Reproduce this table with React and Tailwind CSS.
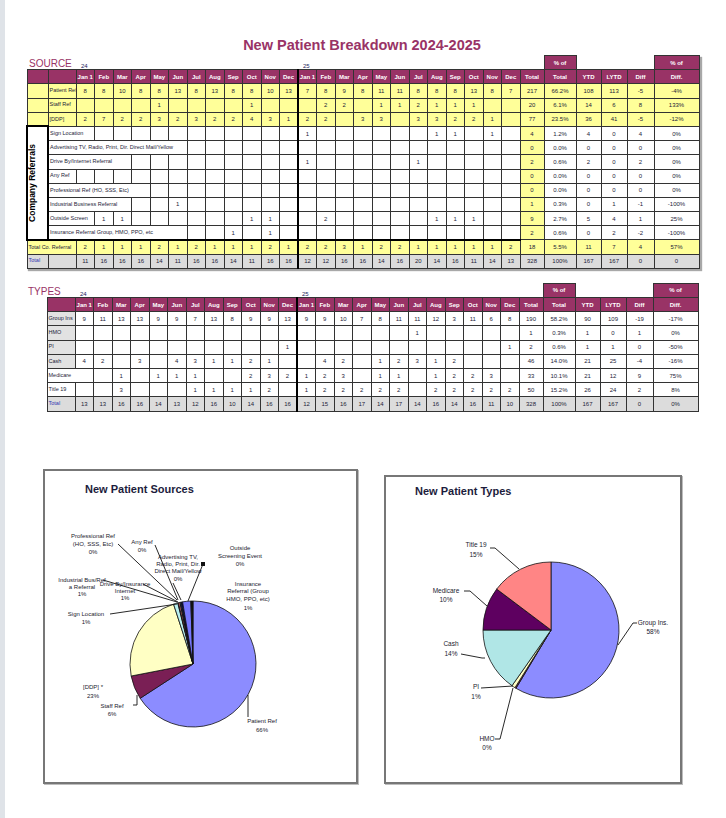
import React from "react"

// spreadsheet print preview: new patient breakdown + two pie charts

const MONTHS = ["Jan 1", "Feb", "Mar", "Apr", "May", "Jun", "Jul", "Aug", "Sep", "Oct", "Nov", "Dec"]
const HEAD = [...MONTHS, ...MONTHS]

const B = "border border-[#333]"
const C = `${B} p-0 text-center leading-none text-[6px] text-[#1c1c38]`
const Y = "bg-[#ffff99]"
const G = "bg-[#dcdcdc]"
const PLUM = "bg-[#993366]"
const LBL = `${B} p-0 pl-[1px] text-left leading-none text-[5.5px] text-[#1c1c38] whitespace-nowrap overflow-hidden`

const at = (map) => Array.from({ length: 24 }, (_, i) => (map[i] !== undefined ? map[i] : ""))

const yellowRows = [
  { label: "Patient Ref", v: [8, 8, 10, 8, 8, 13, 8, 13, 8, 8, 10, 13, 7, 8, 9, 8, 11, 11, 8, 8, 8, 13, 8, 7], r: ["217", "66.2%", "108", "113", "-5", "-4%"] },
  { label: "Staff Ref", v: at({ 4: 1, 9: 1, 13: 2, 14: 2, 16: 1, 17: 1, 18: 2, 19: 1, 20: 1, 21: 1 }), r: ["20", "6.1%", "14", "6", "8", "133%"] },
  { label: "[DDP]", v: [2, 7, 2, 2, 3, 2, 3, 2, 2, 4, 3, 1, 2, 2, "", 3, 3, "", 3, 3, 2, 2, 1, ""], r: ["77", "23.5%", "36", "41", "-5", "-12%"] },
]

const companyRows = [
  { label: "Sign Location", span: 2, v: at({ 12: 1, 19: 1, 20: 1, 22: 1 }), r: ["4", "1.2%", "4", "0", "4", "0%"] },
  { label: "Advertising TV, Radio, Print, Dir. Direct Mail/Yellow", span: 7, v: at({}), r: ["0", "0.0%", "0", "0", "0", "0%"] },
  { label: "Drive By/Internet Referral", span: 4, v: at({ 12: 1, 18: 1 }), r: ["2", "0.6%", "2", "0", "2", "0%"] },
  { label: "Any Ref", span: 1, v: at({}), r: ["0", "0.0%", "0", "0", "0", "0%"] },
  { label: "Professional Ref (HO, SSS, Etc)", span: 5, v: at({}), r: ["0", "0.0%", "0", "0", "0", "0%"] },
  { label: "Industrial Business Referral", span: 4, v: at({ 5: 1 }), r: ["1", "0.3%", "0", "1", "-1", "-100%"] },
  { label: "Outside Screen", span: 2, v: at({ 1: 1, 2: 1, 9: 1, 10: 1, 13: 2, 19: 1, 20: 1, 21: 1 }), r: ["9", "2.7%", "5", "4", "1", "25%"] },
  { label: "Insurance Referral Group, HMO, PPO, etc", span: 7, v: at({ 8: 1, 10: 1 }), r: ["2", "0.6%", "0", "2", "-2", "-100%"] },
]

const totalCo = { v: [2, 1, 1, 1, 2, 1, 2, 1, 1, 1, 2, 1, 2, 2, 3, 1, 2, 2, 1, 1, 1, 1, 1, 2], r: ["18", "5.5%", "11", "7", "4", "57%"] }
const total1 = { v: [11, 16, 16, 16, 14, 11, 16, 16, 14, 11, 16, 16, 12, 12, 16, 16, 14, 16, 20, 14, 16, 11, 14, 13], r: ["328", "100%", "167", "167", "0", "0"] }

const typeRows = [
  { label: "Group Ins", grey: true, span: 1, v: [9, 11, 13, 13, 9, 9, 7, 13, 8, 9, 9, 13, 9, 9, 10, 7, 8, 11, 11, 12, 3, 11, 6, 8], r: ["190", "58.2%", "90", "109", "-19", "-17%"] },
  { label: "HMO", grey: true, span: 1, v: at({ 18: 1 }), r: ["1", "0.3%", "1", "0", "1", "0%"] },
  { label: "PI", grey: true, span: 1, v: at({ 11: 1, 23: 1 }), r: ["2", "0.6%", "1", "1", "0", "-50%"] },
  { label: "Cash", grey: true, span: 1, v: [4, 2, "", 3, "", 4, 3, 1, 1, 2, 1, "", "", 4, 2, "", 1, 2, 3, 1, 2, "", "", ""], r: ["46", "14.0%", "21", "25", "-4", "-16%"] },
  { label: "Medicare", span: 2, v: ["", "", 1, "", 1, 1, 1, "", "", 2, 3, 2, 1, 2, 3, "", 1, 1, "", 1, 2, 2, 3, ""], r: ["33", "10.1%", "21", "12", "9", "75%"] },
  { label: "Title 19", span: 1, v: ["", "", 3, "", "", "", 1, 1, 1, 1, 2, "", 1, 2, 2, 2, 2, 2, "", 2, 2, 2, 2, 2], r: ["50", "15.2%", "26", "24", "2", "8%"] },
]
const total2 = { v: [13, 13, 16, 16, 14, 13, 12, 16, 10, 14, 16, 16, 12, 15, 16, 17, 14, 17, 14, 16, 14, 16, 11, 10], r: ["328", "100%", "167", "167", "0", "0%"] }

const Cols = () => (
  <colgroup>
    <col className="w-[21px]" />
    <col className="w-[28px]" />
    {HEAD.map((_, i) => (
      <col key={i} className="w-[18.5px]" />
    ))}
    <col className="w-[24px]" />
    <col className="w-[32px]" />
    <col className="w-[25px]" />
    <col className="w-[26px]" />
    <col className="w-[27px]" />
    <col className="w-[45px]" />
  </colgroup>
)

function Vals({ v, from = 0, bg = "" }) {
  return v.slice(from).map((x, j) => {
    const i = from + j
    return (
      <td key={i} className={`${C} ${bg} ${i === 12 ? "border-l-2 border-l-black" : ""}`}>
        {x}
      </td>
    )
  })
}

function Right({ r, bg = "", totalBg = "" }) {
  return (
    <>
      <td className={`${C} ${totalBg}`}>{r[0]}</td>
      {r.slice(1).map((x, i) => (
        <td key={i} className={`${C} ${bg}`}>
          {x}
        </td>
      ))}
    </>
  )
}

function TopRow({ label }) {
  return (
    <tr className="h-[14.2px]">
      <td colSpan={2} className="p-0 pl-[2px] align-bottom text-left text-[10px] leading-none text-[#993366] whitespace-nowrap">
        {label}
      </td>
      <td className="p-0 pl-[5px] align-bottom text-left text-[6px] leading-none text-[#1c1c60]">24</td>
      {Array.from({ length: 11 }, (_, i) => (
        <td key={i} className="p-0" />
      ))}
      <td className="p-0 pl-[5px] align-bottom text-left text-[6px] leading-none text-[#1c1c60]">25</td>
      {Array.from({ length: 11 }, (_, i) => (
        <td key={i} className="p-0" />
      ))}
      <td className="p-0" />
      <td className={`${C} ${PLUM} font-bold text-white`}>% of</td>
      <td className="p-0" />
      <td className="p-0" />
      <td className="p-0" />
      <td className={`${C} ${PLUM} font-bold text-white`}>% of</td>
    </tr>
  )
}

function HeadRow({ withA }) {
  return (
    <tr className="h-[14.2px]">
      {withA ? <td className={`${B} ${PLUM}`} /> : <td className="p-0" />}
      <td className={`${B} ${PLUM}`} />
      {HEAD.map((m, i) => (
        <td key={i} className={`${C} ${PLUM} font-bold text-white ${i === 12 ? "border-l-2 border-l-black" : ""}`}>
          {m}
        </td>
      ))}
      {["Total", "Total", "YTD", "LYTD", "Diff", "Diff."].map((h, i) => (
        <td key={i} className={`${C} ${PLUM} font-bold text-white`}>
          {h}
        </td>
      ))}
    </tr>
  )
}

function SourceTable() {
  return (
    <table className="ml-[21px] mt-[2px] w-[672px] table-fixed border-collapse shadow-[2px_2px_1px_#a8a8a8]">
      <Cols />
      <tbody>
        <TopRow label="SOURCE" />
        <HeadRow withA />
        {yellowRows.map((row) => (
          <tr key={row.label} className="h-[14.2px]">
            <td className={`${B} ${Y}`} />
            <td className={`${LBL} ${Y}`}>{row.label}</td>
            <Vals v={row.v} bg={Y} />
            <Right r={row.r} bg={Y} totalBg={Y} />
          </tr>
        ))}
        {companyRows.map((row, k) => (
          <tr key={row.label} className="h-[14.2px]">
            {k === 0 && (
              <td rowSpan={8} className="border-2 border-black bg-white p-0">
                <div className="mx-auto rotate-180 whitespace-nowrap text-[8.5px] font-bold leading-none text-black [writing-mode:vertical-rl]">
                  Company Referrals
                </div>
              </td>
            )}
            <td colSpan={row.span} className={`${LBL} bg-white`}>
              {row.label}
            </td>
            <Vals v={row.v} from={row.span - 1} />
            <Right r={row.r} bg="bg-white" totalBg={Y} />
          </tr>
        ))}
        <tr className="h-[14.2px]">
          <td colSpan={2} className={`${LBL} ${Y} border-t-2 border-t-black`}>
            Total Co. Referral
          </td>
          <Vals v={totalCo.v} bg={`${Y} border-t-2 border-t-black`} />
          <Right r={totalCo.r} bg={Y} totalBg={Y} />
        </tr>
        <tr className="h-[14.2px]">
          <td className={`${LBL} ${G} text-[#3434b0]`}>Total</td>
          <td className={`${B} ${G}`} />
          <Vals v={total1.v} bg={G} />
          <Right r={total1.r} bg={G} totalBg={G} />
        </tr>
      </tbody>
    </table>
  )
}

function TypesTable() {
  return (
    <table className="ml-[21px] mt-[14px] w-[672px] table-fixed border-collapse">
      <Cols />
      <tbody>
        <TopRow label="TYPES" />
        <HeadRow />
        {typeRows.map((row) => (
          <tr key={row.label} className="h-[14.2px]">
            <td className="p-0" />
            <td colSpan={row.span} className={`${LBL} ${row.grey ? "bg-[#e2e2e2]" : "bg-white"}`}>
              {row.label}
            </td>
            <Vals v={row.v} from={row.span - 1} />
            <Right r={row.r} />
          </tr>
        ))}
        <tr className="h-[14.2px]">
          <td className="p-0" />
          <td className={`${LBL} ${G} text-[#3434b0]`}>Total</td>
          <Vals v={total2.v} bg={G} />
          <Right r={total2.r} bg={G} totalBg={G} />
        </tr>
      </tbody>
    </table>
  )
}

function slice(cx, cy, r, a0, a1) {
  const rad = (d) => (d * Math.PI) / 180
  const x0 = cx + r * Math.sin(rad(a0))
  const y0 = cy - r * Math.cos(rad(a0))
  const x1 = cx + r * Math.sin(rad(a1))
  const y1 = cy - r * Math.cos(rad(a1))
  const large = a1 - a0 > 180 ? 1 : 0
  return `M${cx},${cy} L${x0},${y0} A${r},${r} 0 ${large} 1 ${x1},${y1} Z`
}

function Label({ x, ys, lines, size = 6 }) {
  return (
    <text textAnchor="middle" fontSize={size} fill="#1a1a2e">
      {lines.map((t, i) => (
        <tspan key={i} x={x} y={ys[i]}>
          {t}
        </tspan>
      ))}
    </text>
  )
}

const sources = [
  [0, 237, "#8c8cff"],
  [237, 259, "#7a1f55"],
  [259, 342, "#ffffc4"],
  [342, 346, "#b8f0f0"],
  [346, 346.6, "#660066"],
  [346.6, 348, "#ff8080"],
  [348, 348.6, "#0066cc"],
  [348.6, 349.2, "#ccccff"],
  [349.2, 350.5, "#000080"],
  [350.5, 358, "#7878ff"],
  [358, 360, "#111111"],
]

const sourceLabels = [
  { x: 217, ys: [252, 261], lines: ["Patient Ref", "66%"] },
  { x: 48, ys: [218, 227], lines: ["[DDP] *", "23%"] },
  { x: 67, ys: [237, 245], lines: ["Staff Ref", "6%"] },
  { x: 41, ys: [145, 153], lines: ["Sign Location", "1%"] },
  { x: 37, ys: [111, 118, 125], lines: ["Industrial Bus/Ref", "a Referral", "1%"] },
  { x: 80, ys: [115, 122, 129], lines: ["Drive By/Insurance", "Internet", "1%"] },
  { x: 48, ys: [67, 75, 83], lines: ["Professional Ref", "(HO, SSS, Etc)", "0%"] },
  { x: 97, ys: [73, 81], lines: ["Any Ref", "0%"] },
  { x: 133, ys: [88, 95, 102, 110], lines: ["Advertising TV,", "Radio, Print, Dir.", "Direct Mail/Yellow", "0%"] },
  { x: 195, ys: [79, 87, 95], lines: ["Outside", "Screening Event", "0%"] },
  { x: 203, ys: [115, 122, 130, 139], lines: ["Insurance", "Referral (Group", "HMO, PPO, etc)", "1%"] },
]

const sourceLeaders = [
  "73,73 132,129",
  "110,74 133,129",
  "58,109 132,131",
  "98,113 133,131",
  "65,143 92,139 132,133",
  "128,112 136,129",
  "158,93 143,130",
  "203,224 203,246",
  "92,224 92,234 88,234",
]

const types = [
  [0, 211, "#8c8cff"],
  [211, 212, "#7a1f55"],
  [212, 215, "#ffffc4"],
  [215, 270, "#b0e6e6"],
  [270, 307, "#5e0060"],
  [307, 360, "#ff8585"],
]

const typeLabels = [
  { x: 90, ys: [70, 80], lines: ["Title 19", "15%"] },
  { x: 60, ys: [116, 125], lines: ["Medicare", "10%"] },
  { x: 65, ys: [169, 179], lines: ["Cash", "14%"] },
  { x: 90, ys: [212, 222], lines: ["PI", "1%"] },
  { x: 101, ys: [264, 273], lines: ["HMO", "0%"] },
  { x: 267, ys: [148, 157], lines: ["Group Ins.", "58%"] },
]

const typeLeaders = [
  "104,71 109,71 133,92",
  "78,114 84,114 101,129",
  "75,177 96,181 99,181",
  "95,211 127,209",
  "109,262 114,262 127,211",
  "251,146 247,146 232,168",
]

function SourcesChart() {
  return (
    <div className="h-[315px] w-[315px] border-2 border-[#777] bg-white shadow-[1px_1px_0_#bdbdbd]">
      <svg width="311" height="311" viewBox="0 0 311 311">
        <text x="40" y="22" fontSize="11" fontWeight="bold" fill="#1c1c3c">
          New Patient Sources
        </text>
        {sources.map(([a0, a1, c], i) => (
          <path key={i} d={slice(148, 193, 63, a0, a1)} fill={c} stroke="#111" strokeWidth="0.8" strokeLinejoin="round" />
        ))}
        {sourceLeaders.map((p, i) => (
          <polyline key={i} points={p} fill="none" stroke="#111" strokeWidth="0.9" />
        ))}
        <rect x="156" y="91" width="4" height="4" fill="#111" />
        {sourceLabels.map((l, i) => (
          <Label key={i} {...l} />
        ))}
      </svg>
    </div>
  )
}

function TypesChart() {
  return (
    <div className="h-[309px] w-[298px] border-2 border-[#777] bg-white shadow-[1px_1px_0_#bdbdbd]">
      <svg width="294" height="305" viewBox="0 0 294 305">
        <text x="29" y="18" fontSize="11" fontWeight="bold" fill="#1c1c3c">
          New Patient Types
        </text>
        {types.map(([a0, a1, c], i) => (
          <path key={i} d={slice(165, 153, 68, a0, a1)} fill={c} stroke="#111" strokeWidth="0.8" strokeLinejoin="round" />
        ))}
        {typeLeaders.map((p, i) => (
          <polyline key={i} points={p} fill="none" stroke="#111" strokeWidth="0.9" />
        ))}
        {typeLabels.map((l, i) => (
          <Label key={i} {...l} size={6.5} />
        ))}
      </svg>
    </div>
  )
}

export default function App() {
  return (
    <div className="min-h-[818px] w-[726px] border-l-[5px] border-[#dfe3e8] bg-white font-['Liberation_Sans',Arial,sans-serif]">
      <h1 className="pr-[7px] pt-[37px] text-center text-[14.5px] font-bold leading-[16px] text-[#993366]">
        New Patient Breakdown 2024-2025
      </h1>
      <SourceTable />
      <TypesTable />
      <div className="ml-[38px] mt-[57px] flex items-end gap-[26px]">
        <SourcesChart />
        <TypesChart />
      </div>
    </div>
  )
}
